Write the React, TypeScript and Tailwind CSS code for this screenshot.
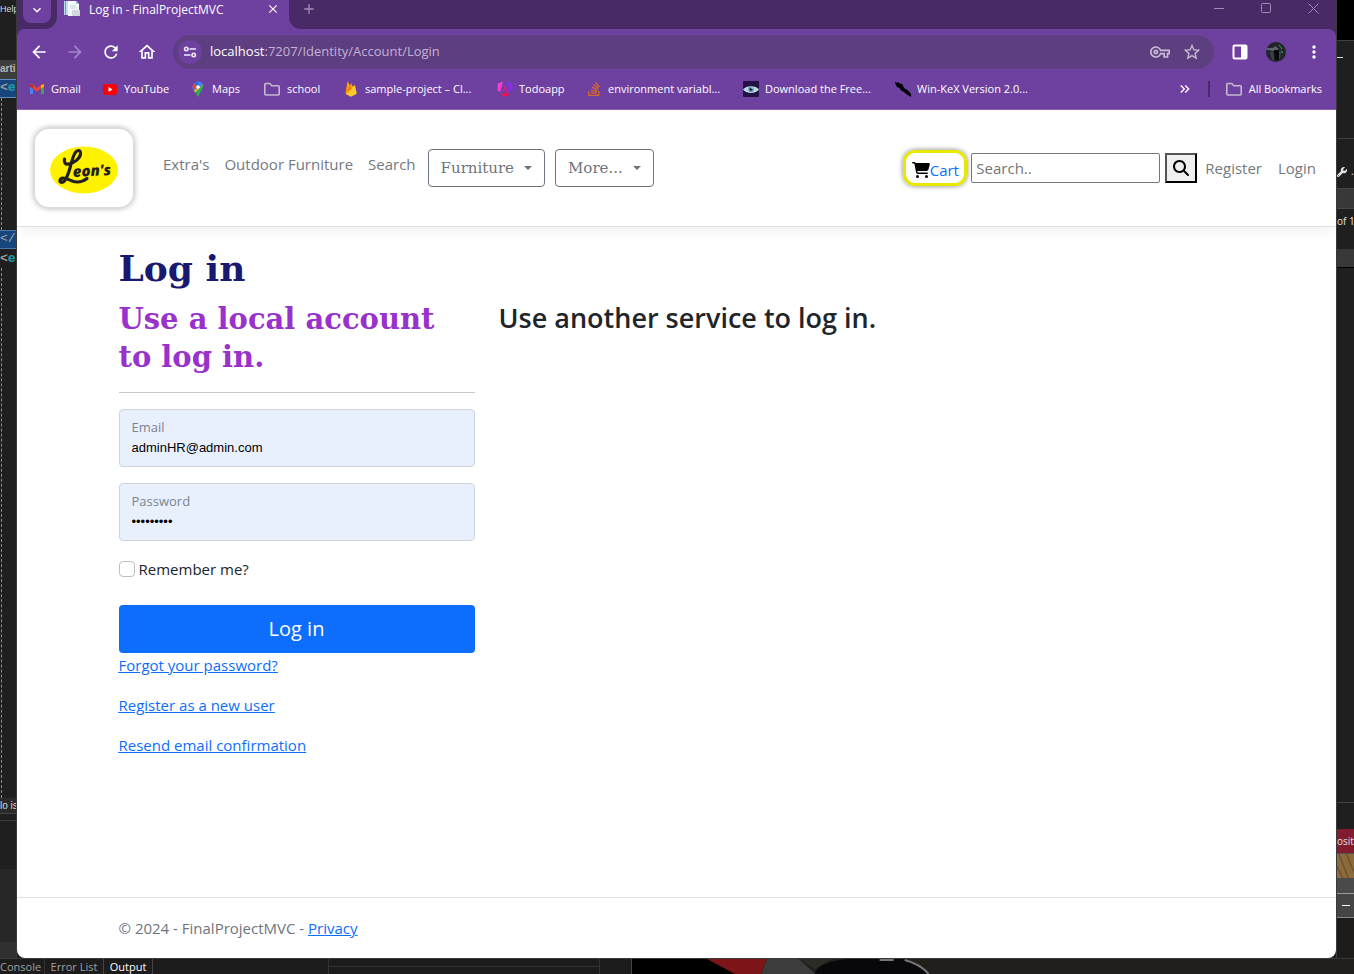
import type { ReactNode } from "react";
import {
  MdAdd,
  MdArrowBack,
  MdArrowForward,
  MdClose,
  MdKeyboardArrowDown,
  MdKeyboardDoubleArrowRight,
  MdMoreVert,
  MdOutlineHome,
  MdOutlineVpnKey,
  MdRefresh,
  MdStarBorder,
} from "react-icons/md";
import { FaCartShopping, FaMagnifyingGlass, FaStackOverflow, FaWrench } from "react-icons/fa6";

const uiFont = "font-['Open_Sans','Noto_Sans',sans-serif]";
const slabFont = "font-['DejaVu_Serif',serif]";

function GmailIcon() {
  return (
    <svg viewBox="0 0 16 16" className="size-4">
      <path d="M1 4v9h3V7z" fill="#4285f4" />
      <path d="M15 4v9h-3V7z" fill="#34a853" />
      <path d="M1 3.500 2.500 2.500 8 7l5.500-4.500L15 3.500v2L8 10.500 1 5.500z" fill="#ea4335" />
      <path d="M1 3.500v2l3 2.300V4z" fill="#c5221f" />
      <path d="M12 4v3.800l3-2.300v-2z" fill="#fbbc04" />
    </svg>
  );
}

function YouTubeIcon() {
  return (
    <svg viewBox="0 0 16 16" className="size-4">
      <rect x="1" y="3" width="14" height="11" rx="3" fill="#f00" />
      <path d="m6.500 6 4 2.500-4 2.500z" fill="#fff" />
    </svg>
  );
}

function MapsIcon() {
  return (
    <svg viewBox="0 0 16 16" className="size-4">
      <path d="M8 .5a5.500 5.500 0 0 0-5.500 5.500c0 2 1 3.300 2.500 5L8 6z" fill="#4285f4" />
      <path d="M8 .5 12 2.300 8 7 4 2.200A5.300 5.300 0 0 1 8 .5z" fill="#1a73e8" />
      <path d="M3.900 2.300 7 5 3.500 9C2 6.500 2.300 4 3.900 2.300z" fill="#ea4335" />
      <path d="m12.800 3.300-8.900 6.500 1.600 1.900 7.800-8z" fill="#fbbc04" />
      <path d="M13.200 4c1 3.500-2.900 5.500-4 10.500-.4 1.500-1.800 1.500-2.200 0-.3-1.200-.9-2.200-1.700-3.200z" fill="#34a853" />
      <path d="M8 .5c2 0 4 .8 5 3L10.500 6 8 3z" fill="#4285f4" />
      <circle cx="8" cy="6" r="1.800" fill="#fff" />
    </svg>
  );
}

function FolderIcon() {
  return (
    <svg viewBox="0 0 18 16" className="h-4 w-[18px]" fill="none" stroke="#c3b9cb" strokeWidth="1.600">
      <path d="M1.800 13V3.500a1 1 0 0 1 1-1h4l2 2.200h6.400a1 1 0 0 1 1 1V13a1 1 0 0 1-1 1H2.800a1 1 0 0 1-1-1z" />
    </svg>
  );
}

function FirebaseIcon() {
  return (
    <svg viewBox="0 0 16 16" className="size-4">
      <path d="M2.500 12.500 4.300 1.200c.1-.5.600-.5.800-.1L7 4.500l.9-1.600c.2-.4.600-.4.800 0l4 9.600z" fill="#ffa000" />
      <path d="m2.500 12.700 8.700-8.300c.3-.3.800-.1.900.3l1.700 8-5.300 2.900c-.4.200-.8.200-1.200 0z" fill="#ffca28" />
      <path d="m2.500 12.600 4.600-8 1.800 3.200z" fill="#f57c00" />
    </svg>
  );
}

function AngularIcon() {
  return (
    <svg viewBox="0 0 16 16" className="size-4">
      <path d="M6 .5.800 2.500.500 9.500 3.200 11z" fill="#f43fd0" />
      <path d="m10 .5 5.200 2 .3 7-2.700 1.500z" fill="#8a2bf0" />
      <path d="M4.500 12.300h7l.8 1.200L8 15.800l-4.300-2.300z" fill="#f5114d" />
      <path d="m8 4 2.800 6.500H9.300L8 7.300l-1.300 3.200H5.200z" fill="#e0189c" />
    </svg>
  );
}

function EyeIcon() {
  return (
    <svg viewBox="0 0 16 16" className="size-4">
      <rect width="16" height="16" rx="1" fill="#241247" />
      <path d="M0 8.500C3 4 13 4 16 8.500 13 13 3 13 0 8.500z" fill="#b9dbe6" />
      <circle cx="8" cy="8.200" r="2.800" fill="#6a93a6" />
      <circle cx="8" cy="8.200" r="1.300" fill="#101a30" />
      <circle cx="9" cy="7" r=".8" fill="#fff" />
    </svg>
  );
}

function KaliIcon() {
  return (
    <svg viewBox="0 0 16 16" className="size-4">
      <path d="M0 .5 2 2l1-1 2.500 2L7 2.500 9 7l4 2.500 3 3.500v3l-4-2.500L9 11 6 9.500 4.500 7 2 6 .500 3z" fill="#000" />
    </svg>
  );
}

function TuneIcon() {
  return (
    <svg viewBox="0 0 14 14" className="size-[14px]" fill="none" stroke="#f1eaf7" strokeWidth="1.600">
      <circle cx="3.300" cy="4" r="1.700" />
      <path d="M6.500 4H13M1 10h6.500" />
      <circle cx="10.700" cy="10" r="1.700" />
    </svg>
  );
}

function PageIcon() {
  return (
    <svg viewBox="0 0 17 17" className="size-[17px]">
      <path d="M0 1h9v14H0z" fill="#bfe0f2" />
      <path d="M1.500 1v14" stroke="#5ba2cc" />
      <path d="M4 1h8l3 3v12H4z" fill="#f5f8fa" />
      <path d="M12 1v3h3" fill="#a9bfce" />
      <path d="M6 6h6M6 8h6" stroke="#c9d4dc" />
      <path d="M8 10h8v6H8z" fill="#d3d8dc" />
    </svg>
  );
}

function SidePanelIcon() {
  return (
    <svg viewBox="0 0 16 16" className="size-4">
      <rect x="1.500" y="1.500" width="13" height="13" rx="1" fill="none" stroke="#fff" strokeWidth="2" />
      <path d="M9 1h6v14H9z" fill="#fff" />
    </svg>
  );
}

function Avatar() {
  return (
    <svg viewBox="0 0 20 20" className="size-5">
      <clipPath id="avatar-clip">
        <circle cx="10" cy="10" r="10" />
      </clipPath>
      <g clipPath="url(#avatar-clip)">
        <rect width="20" height="20" fill="#22252a" />
        <path d="M0 6h7l2-2 4 3-3 2H6L3 8H0z" fill="#5b656c" />
        <path d="M4 10h3l1 8H6zM13 9l2 1-1 7-2 1z" fill="#3c464b" />
        <path d="M8 8h5v10H9z" fill="#07090b" />
        <path d="m13 3 3 4M15 9l2 2" stroke="#2f8a45" strokeWidth="1.200" />
      </g>
    </svg>
  );
}

function LeonsLogo() {
  return (
    <svg viewBox="0 0 68 48" className="h-12 w-[68px]" role="img" aria-label="Leon's">
      <ellipse cx="34" cy="24" rx="34" ry="23.500" fill="#fff200" />
      <path
        d="M14.500 13c-.5 3 .5 5.500 3.500 5.200 6-.7 12.500-6 12.500-10.700 0-4-3.500-3.800-5.500-.5-3.500 6-4 14-7 21-1.500 4.500-3.500 8.500-6.500 8.500-2.500 0-2-4.500 1.500-4.500 5 0 8 3.800 14 4 4 .1 7-1.200 10-3.500"
        fill="none"
        stroke="#231f20"
        strokeWidth="3.200"
        strokeLinecap="round"
        strokeLinejoin="round"
      />
      <text x="23" y="31" transform="rotate(-3 23 31)" className="font-['Open_Sans',sans-serif] text-[15px] font-extrabold italic" fill="#231f20">
        eon's
      </text>
    </svg>
  );
}

const bookmarks: { label: string; icon: ReactNode; width: string }[] = [
  { label: "Gmail", icon: <GmailIcon />, width: "w-[73px]" },
  { label: "YouTube", icon: <YouTubeIcon />, width: "w-[88px]" },
  { label: "Maps", icon: <MapsIcon />, width: "w-[73px]" },
  { label: "school", icon: <FolderIcon />, width: "w-[80px]" },
  { label: "sample-project – Cl...", icon: <FirebaseIcon />, width: "w-[154px]" },
  { label: "Todoapp", icon: <AngularIcon />, width: "w-[89px]" },
  { label: "environment variabl...", icon: <FaStackOverflow className="size-4 text-[#d9672f]" />, width: "w-[157px]" },
  { label: "Download the Free...", icon: <EyeIcon />, width: "w-[152px]" },
  { label: "Win-KeX Version 2.0...", icon: <KaliIcon />, width: "w-[150px]" },
];

function TabStrip() {
  return (
    <div className="flex h-[29px] shrink-0 items-start bg-[#472a66] text-xs text-white">
      <div className="h-full w-10 shrink-0 bg-[#6e41a1]">
        <div className="h-full rounded-br-xl bg-[#472a66] pl-[6px]">
          <button aria-label="Search tabs" className="flex h-[23px] w-7 items-center justify-center rounded-b-lg bg-[#6e41a1] pb-1">
            <MdKeyboardArrowDown className="size-4" />
          </button>
        </div>
      </div>
      <div className="flex h-full w-[232px] shrink-0 items-start gap-2 bg-[#6e41a1] pr-2 pl-[7px]">
        <PageIcon />
        <span className="flex-1 leading-5">Log in - FinalProjectMVC</span>
        <button aria-label="Close tab" className="flex h-[18px] w-4 items-center justify-center">
          <MdClose className="size-[14px]" />
        </button>
      </div>
      <div className="h-full bg-[#6e41a1]">
        <div className="flex h-full items-start rounded-bl-xl bg-[#472a66] pl-3">
          <button aria-label="New tab" className="flex h-[18px] items-center text-[#a48dba]">
            <MdAdd className="size-4" />
          </button>
        </div>
      </div>
      <div className="ml-auto flex h-[17px] items-center gap-9 pr-[17px] text-[#a18eb4]">
        <button aria-label="Minimize">
          <svg viewBox="0 0 11 11" className="size-[11px]" stroke="currentColor" fill="none"><path d="M0 5.500h10" /></svg>
        </button>
        <button aria-label="Maximize">
          <svg viewBox="0 0 11 11" className="size-[11px]" stroke="currentColor" fill="none"><rect x=".5" y=".5" width="9" height="9" rx="1" /></svg>
        </button>
        <button aria-label="Close">
          <svg viewBox="0 0 11 11" className="size-[11px]" stroke="currentColor" fill="none"><path d="m.5.500 10 10m0-10-10 10" /></svg>
        </button>
      </div>
    </div>
  );
}

function BrowserChrome() {
  return (
    <div className="shrink-0 bg-[#472a66]">
      <TabStrip />
      <div className="rounded-t-lg border-b border-[#8a66b4] bg-[#6e41a1] text-white">
        <div className="flex h-[46px] items-center px-3">
          <div className="flex w-[144px] shrink-0 gap-4">
            <button aria-label="Back"><MdArrowBack className="size-5" /></button>
            <button aria-label="Forward" className="text-[#a583ca]"><MdArrowForward className="size-5" /></button>
            <button aria-label="Reload"><MdRefresh className="size-5" /></button>
            <button aria-label="Home"><MdOutlineHome className="size-5" /></button>
          </div>
          <div className="flex h-[34px] flex-1 items-center rounded-full bg-[#5d3e80] pr-3 pl-[5px]">
            <button aria-label="Site information" className="flex size-6 items-center justify-center rounded-full bg-[#6e41a1]">
              <TuneIcon />
            </button>
            <div className="flex-1 pl-2 text-[13px] text-[#c3b2d4]">
              <span className="text-white">localhost</span>:7207/Identity/Account/Login
            </div>
            <div className="flex gap-3 text-[#c8bdd2]">
              <button aria-label="Passwords"><MdOutlineVpnKey className="size-5" /></button>
              <button aria-label="Bookmark this page"><MdStarBorder className="size-5" /></button>
            </div>
          </div>
          <div className="flex items-center gap-[18px] pl-[18px]">
            <button aria-label="Side panel"><SidePanelIcon /></button>
            <button aria-label="Profile"><Avatar /></button>
            <button aria-label="Menu"><MdMoreVert className="size-5" /></button>
          </div>
        </div>
        <nav aria-label="Bookmarks" className="flex h-[34px] items-center pr-[14px] pb-[6px] pl-3 text-[11px] whitespace-nowrap">
          {bookmarks.map((b) => (
            <a key={b.label} href="#" className={`flex shrink-0 items-center gap-[6px] ${b.width}`}>
              {b.icon}
              <span>{b.label}</span>
            </a>
          ))}
          <div className="ml-auto flex items-center">
            <button aria-label="More bookmarks"><MdKeyboardDoubleArrowRight className="size-4" /></button>
            <span className="mx-[15px] h-4 w-[2px] bg-[#472a66]" />
            <a href="#" className="flex items-center gap-[6px]">
              <FolderIcon />
              <span>All Bookmarks</span>
            </a>
          </div>
        </nav>
      </div>
    </div>
  );
}

function DropdownButton({ children }: { children: ReactNode }) {
  return (
    <button className={`flex h-[38px] items-center gap-[10px] rounded border border-[#6c757d] px-3 text-[15px] text-[#6c757d] ${slabFont}`}>
      {children}
      <svg viewBox="0 0 8 4" className="h-1 w-2" fill="currentColor"><path d="M0 0h8L4 4z" /></svg>
    </button>
  );
}

function SiteHeader() {
  return (
    <header className="flex h-[117px] shrink-0 items-center border-b border-[#dee2e6] px-4 text-[#73797f] shadow-[0_4px_12px_rgba(0,0,0,0.06)]">
      <a href="#" className="flex h-[82px] w-[102px] shrink-0 items-center justify-center rounded-2xl border-2 border-[#dcdce0] pt-1 shadow-[0_0_5px_rgba(0,0,0,0.25)]">
        <LeonsLogo />
      </a>
      <nav className="flex items-center pl-7">
        <div className="mr-3 flex gap-[15px] pb-2 leading-6">
          <a href="#">Extra's</a>
          <a href="#">Outdoor Furniture</a>
          <a href="#">Search</a>
        </div>
        <div className="flex gap-[10px]">
          <DropdownButton>Furniture</DropdownButton>
          <DropdownButton>More...</DropdownButton>
        </div>
      </nav>
      <div className="ml-auto flex items-center">
        <a href="#" className="mr-1 flex h-9 w-16 items-center justify-center rounded-xl border-3 border-[#e8e800] pt-1 text-[#0d6efd] shadow-[0_0_5px_rgba(0,0,0,0.5)]">
          <FaCartShopping className="h-4 w-[18px] text-black" />
          Cart
        </a>
        <form className="flex items-center gap-[5px]" onSubmit={(e) => e.preventDefault()}>
          <input aria-label="Search" placeholder="Search.." className="h-[30px] w-[189px] rounded-xs border border-[#767676] px-1 placeholder:text-[#757575]" />
          <button aria-label="Submit search" className="flex h-[30px] w-8 items-center justify-center border-2 border-[#000] border-t-[#555] border-l-[#555] bg-[#efefef] text-black">
            <FaMagnifyingGlass className="size-4" />
          </button>
        </form>
        <div className="flex gap-4 pr-1 pl-2">
          <a href="#">Register</a>
          <a href="#">Login</a>
        </div>
      </div>
    </header>
  );
}

function Field({ id, label, type, value }: { id: string; label: string; type: string; value: string }) {
  return (
    <div className="mb-4 flex h-[58px] flex-col rounded border border-[#ced4da] bg-[#e8f0fe] px-3 pt-[7px]">
      <label htmlFor={id} className="text-[13px] leading-5 text-[#7d838c]">{label}</label>
      <input id={id} type={type} defaultValue={value} className="h-5 w-full bg-transparent font-['Liberation_Sans',sans-serif] text-[13px] text-black outline-none" />
    </div>
  );
}

function LoginPage() {
  return (
    <main className="mx-auto grid w-full max-w-[1140px] flex-1 grid-cols-3 content-start gap-6 px-3 pt-[17px] text-[#212529]">
      <h1 className={`col-span-3 -mb-4 text-[36px] leading-[48px] font-bold text-[#191970] ${slabFont}`}>Log in</h1>
      <section>
        <h2 className={`text-[29px] leading-[38px] font-bold text-[#9932cc] ${slabFont}`}>Use a local account to log in.</h2>
        <hr className="my-4 border-[#c8c9ca]" />
        <form onSubmit={(e) => e.preventDefault()}>
          <Field id="email" label="Email" type="email" value="adminHR@admin.com" />
          <Field id="password" label="Password" type="password" value="password1" />
          <label className="flex h-6 items-center gap-1">
            <input type="checkbox" className="size-4 appearance-none rounded border border-[#bfbfbf] bg-white" />
            Remember me?
          </label>
          <button className="mt-6 h-12 w-full rounded bg-[#0d6efd] text-xl text-white">Log in</button>
          <div className="flex flex-col items-start gap-4 leading-6 text-[#0d6efd] underline">
            <a href="#">Forgot your password?</a>
            <a href="#">Register as a new user</a>
            <a href="#">Resend email confirmation</a>
          </div>
        </form>
      </section>
      <section className="col-span-2">
        <h3 className="text-[27px] leading-9 font-semibold">Use another service to log in.</h3>
      </section>
    </main>
  );
}

function LeftEdge() {
  return (
    <div className="flex w-[17px] shrink-0 flex-col overflow-hidden border-r border-[#3a3a3a] bg-[#1f1f1f] text-[10px] whitespace-nowrap text-[#d6d6d6]">
      <div className="h-[60px] font-['Liberation_Sans_Narrow','Liberation_Sans',sans-serif] text-[9px] leading-[18px]">Help</div>
      <div className="h-[19px] bg-[#3d3d3d] font-['Liberation_Sans',sans-serif] leading-[18px] font-bold text-[#b4b4b4]">arti</div>
      <div className="h-[19px] border-y border-[#5f8fc0] bg-[#17457e] font-['Liberation_Mono',monospace] text-[13px] leading-4 font-bold text-[#1d9fa8]"><span className="text-[#999]">&lt;</span>e</div>
      <div className="ml-px h-[132px] border-l border-dashed border-[#8a8a8a]" />
      <div className="h-[19px] border-y border-[#4a78ad] bg-[#17457e] font-['Liberation_Mono',monospace] text-[13px] leading-4 text-[#a0a0a0]">&lt;/</div>
      <div className="h-[19px] font-['Liberation_Mono',monospace] text-[13px] font-bold text-[#1d9fa8]"><span className="text-[#999]">&lt;</span>e</div>
      <div className="ml-px flex-1 border-l border-dashed border-[#8a8a8a]" />
      <div className="h-4 border-b border-[#454545] bg-[#2a2a2a] font-['Liberation_Sans',sans-serif] leading-[15px]">lo is</div>
      <div className="h-[7px] border-b border-[#3c3c3c]" />
      <div className="h-12" />
      <div className="h-[73px] bg-[#272727]" />
      <div className="h-4 bg-[#303030]" />
    </div>
  );
}

function RightEdge() {
  return (
    <div className="flex w-[18px] shrink-0 flex-col overflow-hidden border-l border-[#3a3a3a] bg-[#1f1f1f] text-[10px] whitespace-nowrap text-[#e0e0e0]">
      <div className="h-10 bg-black" />
      <div className="h-[98px] border-t border-[#3f3f3f] pt-4"><div className="h-px w-[6px] bg-[#ddd]" /></div>
      <div className="flex h-[50px] items-center gap-1 border-t border-[#3f3f3f] pt-4"><FaWrench className="size-[10px] shrink-0" />.</div>
      <div className="h-[21px] border-y border-[#484848] bg-[#383838]" />
      <div className="h-10 leading-6">of 1</div>
      <div className="h-[19px] border-b border-black bg-[#383838]" />
      <div className="flex-1" />
      <div className="h-[27px] border-t border-[#444]" />
      <div className="h-[25px] border-b border-[#555] bg-[#821b2e] leading-6">osit</div>
      <svg viewBox="0 0 18 24" preserveAspectRatio="none" className="h-6 w-full">
        <path d="M0 0h18v24H0z" fill="#8c6a3c" />
        <path d="m2 0 10 24M10 0l8 18M0 12l6 12" stroke="#6d5130" strokeWidth="1.500" />
      </svg>
      <div className="h-4 border-b border-[#999] bg-[#4a4a4a]" />
      <div className="flex h-6 items-center justify-center border-b border-[#888] bg-[#454545]"><span className="h-px w-2 bg-white" /></div>
      <div className="h-10 bg-[#1e1c1a]" />
    </div>
  );
}

function BottomEdge() {
  return (
    <div className="flex h-4 shrink-0 overflow-hidden border-t border-[#3a3a3a] bg-[#1c1c1c] text-[11px] leading-4 whitespace-nowrap text-[#a0a0a0]">
      <div className="w-[45px] border-r border-[#333]">Console</div>
      <div className="w-[59px] border-r border-[#444] text-center">Error List</div>
      <div className="w-[49px] border-r border-[#444] text-center text-white">Output</div>
      <div className="w-[176px] border-r border-[#333]" />
      <div className="w-[271px] border-r border-[#333]"><div className="h-2 border-b border-[#333]" /></div>
      <div className="w-8 border-r border-[#444]" />
      <svg viewBox="0 0 723 16" preserveAspectRatio="none" className="h-4 min-w-0 flex-1">
        <path d="M0 0h723v16H0z" fill="#211e1c" />
        <path d="M0 0h160v16H0z" fill="#000" />
        <path d="M75 0h60l-6 16h-24z" fill="#7c1418" />
        <path d="M135 0h32l18 16h-56z" fill="#3c3c3c" />
        <path d="M168 0h32l-17 10z" fill="#2c2c26" />
        <path d="M183 16c0-10 20-16 40-16h50c10 2 20 10 24 16z" fill="#08080c" />
        <path d="M248 1h14M273 1c8 2 18 7 24 14" stroke="#777" strokeWidth="2" fill="none" />
      </svg>
    </div>
  );
}

export default function App() {
  return (
    <div className={`flex min-h-screen flex-col bg-[#1c1c1c] text-[15px] ${uiFont}`}>
      <div className="flex flex-1">
        <LeftEdge />
        <div className="flex min-w-0 flex-1 flex-col overflow-hidden rounded-b-lg bg-white">
          <BrowserChrome />
          <SiteHeader />
          <LoginPage />
          <footer className="border-t border-[#dee2e6]">
            <div className="mx-auto max-w-[1140px] px-3 leading-[60px] text-[#6c757d]">
              © 2024 - FinalProjectMVC - <a href="#" className="text-[#0d6efd] underline">Privacy</a>
            </div>
          </footer>
        </div>
        <RightEdge />
      </div>
      <BottomEdge />
    </div>
  );
}
